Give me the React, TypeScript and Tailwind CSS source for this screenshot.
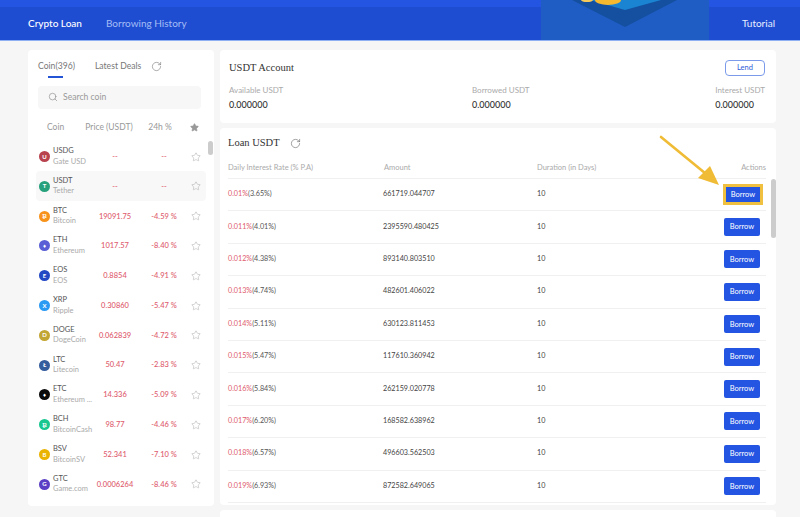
import { Search, RotateCw, Star } from 'lucide-react'

const coins = [
  { sym: 'USDG', name: 'Gate USD', price: '--', change: '--', color: 'bg-[#b8434f]', mark: 'U' },
  { sym: 'USDT', name: 'Tether', price: '--', change: '--', color: 'bg-[#26a17b]', mark: 'T', active: true },
  { sym: 'BTC', name: 'Bitcoin', price: '19091.75', change: '-4.59 %', color: 'bg-[#f7931a]', mark: '₿' },
  { sym: 'ETH', name: 'Ethereum', price: '1017.57', change: '-8.40 %', color: 'bg-[#5a5fd6]', mark: '♦' },
  { sym: 'EOS', name: 'EOS', price: '0.8854', change: '-4.91 %', color: 'bg-[#2348c4]', mark: 'E' },
  { sym: 'XRP', name: 'Ripple', price: '0.30860', change: '-5.47 %', color: 'bg-[#2b9af3]', mark: 'X' },
  { sym: 'DOGE', name: 'DogeCoin', price: '0.062839', change: '-4.72 %', color: 'bg-[#c2a633]', mark: 'D' },
  { sym: 'LTC', name: 'Litecoin', price: '50.47', change: '-2.83 %', color: 'bg-[#345d9d]', mark: 'Ł' },
  { sym: 'ETC', name: 'Ethereum ...', price: '14.336', change: '-5.09 %', color: 'bg-[#0b0b0b]', mark: '♦' },
  { sym: 'BCH', name: 'BitcoinCash', price: '98.77', change: '-4.46 %', color: 'bg-[#17c78f]', mark: '₿' },
  { sym: 'BSV', name: 'BitcoinSV', price: '52.341', change: '-7.10 %', color: 'bg-[#eab300]', mark: 'B' },
  { sym: 'GTC', name: 'Game.com', price: '0.0006264', change: '-8.46 %', color: 'bg-[#5b3fc4]', mark: 'G' },
]

const loans = [
  ['0.01%', '(3.65%)', '661719.044707'],
  ['0.011%', '(4.01%)', '2395590.480425'],
  ['0.012%', '(4.38%)', '893140.803510'],
  ['0.013%', '(4.74%)', '482601.406022'],
  ['0.014%', '(5.11%)', '630123.811453'],
  ['0.015%', '(5.47%)', '117610.360942'],
  ['0.016%', '(5.84%)', '262159.020778'],
  ['0.017%', '(6.20%)', '168582.638962'],
  ['0.018%', '(6.57%)', '496603.562503'],
  ['0.019%', '(6.93%)', '872582.649065'],
]

export default function App() {
  return (
    <div className="relative h-[517px] w-[800px] overflow-hidden bg-[#f6f6f6] font-['Lato',sans-serif] text-[#444]">
      {/* Header */}
      <div className="relative h-[41px] overflow-hidden border-b border-[#8fb0f2] bg-[#1f4dd2]">
        <div className="h-[7px] bg-[#2354e2]" />
        {/* banner art */}
        <svg className="absolute left-[541px] top-0" width="168" height="40" viewBox="0 0 168 40">
          <rect width="168" height="40" fill="#1f5cc4" />
          <path d="M31 0 L84 27 L136 0 Z" fill="#14509f" />
          <path d="M49 0 L84 10 L120 0 Z" fill="#1b84d2" />
          <ellipse cx="67" cy="0" rx="13" ry="5" fill="#f5b82e" />
          <ellipse cx="46" cy="0" rx="6" ry="2" fill="#f5c95a" />
        </svg>
        <div className="relative flex h-[33px] items-center pl-7 pr-[25px] text-[10px]">
          <span className="font-medium text-white">Crypto Loan</span>
          <span className="ml-6 text-[#a5bdf5]">Borrowing History</span>
          <span className="ml-auto text-[#e6edff]">Tutorial</span>
        </div>
      </div>

      <div className="flex gap-[6px] pl-7 pr-6 pt-[9px]">
        {/* Coin list */}
        <div className="relative h-[456px] w-[186px] shrink-0 rounded bg-white">
          <div className="flex items-center px-[10px] pt-[10px] text-[8.6px] text-[#777]">
            <span className="relative">
              Coin(396)
              <span className="absolute -bottom-[5px] left-[10px] h-[2px] w-[15px] bg-[#2354d6]" />
            </span>
            <span className="ml-5">Latest Deals</span>
            <RotateCw className="ml-[10px] text-[#777]" size={11} strokeWidth={1.3} />
          </div>
          <div className="ml-[10px] mr-[13px] mt-[13px] flex h-[23px] items-center rounded bg-[#f7f7f7] pl-[10px] text-[8.6px] text-[#999]">
            <Search size={10} strokeWidth={1.5} className="text-[#888]" />
            <span className="ml-[5px]">Search coin</span>
          </div>
          <div className="mt-[12px] grid grid-cols-[38px_48px_54px_1fr] items-center pl-[19px] text-center text-[8.5px] text-[#999]">
            <span className="text-left">Coin</span>
            <span className="whitespace-nowrap">Price (USDT)</span>
            <span>24h %</span>
            <Star size={9} className="ml-[3px] fill-[#999] text-[#999]" />
          </div>
          <div className="mt-[8px]">
            {coins.map((c) => (
              <div
                key={c.sym}
                className={`mx-[8px] grid h-[29.8px] grid-cols-[14px_28px_68px_30px_1fr] items-center rounded-sm pl-[3px] ${c.active ? 'bg-[#f8f8f8]' : ''}`}
              >
                <span className={`flex h-[11px] w-[11px] items-center justify-center rounded-full text-[6px] font-bold leading-none text-white ${c.color}`}>
                  {c.mark}
                </span>
                <div className="whitespace-nowrap leading-[10.5px]">
                  <div className="text-[7.5px] text-[#555]">{c.sym}</div>
                  <div className="text-[7.5px] text-[#aaa]">{c.name}</div>
                </div>
                <span className="text-center text-[7.5px] font-medium text-[#de5b6d]">{c.price}</span>
                <span className="whitespace-nowrap text-center text-[7.5px] font-medium text-[#de5b6d]">{c.change}</span>
                <Star size={10} strokeWidth={1} className="ml-[12px] text-[#999]" />
              </div>
            ))}
          </div>
          <div className="absolute right-[1px] top-[91px] h-[14px] w-[5px] rounded bg-[#ccc]" />
        </div>

        {/* Right column */}
        <div className="flex w-[556px] flex-col gap-[5px]">
          <div className="h-[73px] rounded bg-white pl-[9px] pr-[11px] pt-[10px]">
            <div className="flex items-center justify-between">
              <span className="font-['Liberation_Serif',serif] text-[10.5px] font-medium text-[#333]">USDT Account</span>
              <span className="flex h-[16px] w-[40px] items-center justify-center rounded-sm border border-[#7b9bea] text-[7.5px] text-[#2f5bd8]">Lend</span>
            </div>
            <div className="mt-[8px] grid grid-cols-[243px_1fr_auto] text-[8px] text-[#aaa]">
              <div>
                <div>Available USDT</div>
                <div className="mt-[2px] text-[9px] font-medium text-[#333]">0.000000</div>
              </div>
              <div>
                <div>Borrowed USDT</div>
                <div className="mt-[2px] text-[9px] font-medium text-[#333]">0.000000</div>
              </div>
              <div>
                <div>Interest USDT</div>
                <div className="mt-[2px] text-[9px] font-medium text-[#333]">0.000000</div>
              </div>
            </div>
          </div>

          <div className="relative h-[377px] rounded bg-white pl-[8px] pr-[10px]">
            <div className="flex h-[30px] items-center">
              <span className="font-['Liberation_Serif',serif] text-[10.5px] font-medium text-[#333]">Loan USDT</span>
              <RotateCw className="ml-[10px] text-[#666]" size={11} strokeWidth={1.3} />
            </div>
            <div className="grid h-[21px] grid-cols-[156px_153px_1fr_auto] items-center border-b border-[#f0f0f0] text-[7.5px] text-[#aaa]">
              <span>Daily Interest Rate (% P.A)</span>
              <span>Amount</span>
              <span>Duration (in Days)</span>
              <span>Actions</span>
            </div>
            {loans.map((row, i) => (
              <div key={row[0]} className="grid h-[32.4px] grid-cols-[155px_154px_1fr_auto] items-center border-b border-[#f0f0f0] text-[7.2px] last:border-b-0">
                <span>
                  <span className="text-[#de5b6d]">{row[0]}</span>
                  <span className="text-[#555]">{row[1]}</span>
                </span>
                <span className="text-[#444]">{row[2]}</span>
                <span className="text-[#444]">10</span>
                <div className="flex w-[42px] justify-end pr-[6px]">
                  {i === 0 ? (
                    <span className="flex h-[15px] w-[34px] items-center justify-center bg-[#2354e2] text-[7.5px] text-white outline-[3px] outline-[#f0c040] [outline-style:solid]">
                      Borrow
                    </span>
                  ) : (
                    <span className="flex h-[18px] w-[36px] items-center justify-center rounded-[2px] bg-[#2354e2] text-[7.5px] text-white">
                      Borrow
                    </span>
                  )}
                </div>
              </div>
            ))}
            <div className="absolute right-0 top-[51px] h-[59px] w-[5px] rounded bg-[#ccc]" />
          </div>

          <div className="h-[20px] rounded bg-white" />
        </div>
      </div>

      {/* Annotation arrow */}
      <svg className="absolute left-[655px] top-[132px]" width="70" height="60" viewBox="0 0 70 60">
        <path d="M6 5 L56 46" stroke="#f0bc35" strokeWidth="2.6" strokeLinecap="round" />
        <path d="M64 53 L43 46 L55 34 Z" fill="#f0bc35" />
      </svg>
    </div>
  )
}
